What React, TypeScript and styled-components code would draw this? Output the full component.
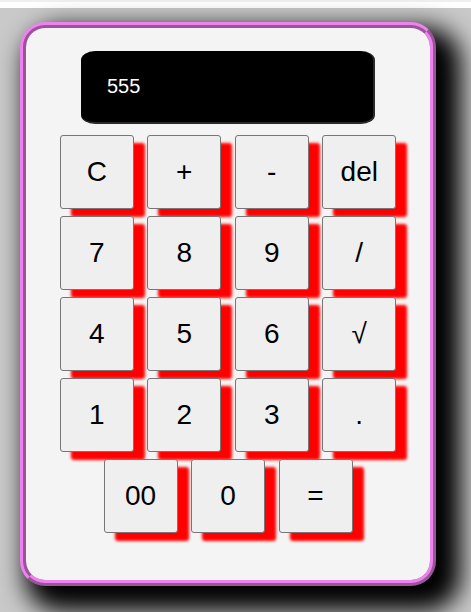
import React from "react";
import styled, { createGlobalStyle } from "styled-components";

const Global = createGlobalStyle`
  html, body {
    margin: 0;
    padding: 0;
    background: #ffffff;
    overflow: hidden;
  }
  body {
    font-family: "Liberation Sans", Arial, sans-serif;
  }
`;

const Page = styled.div`
  border-top: 2px solid #efefef;
  padding-top: 6px;
`;

const Stage = styled.div`
  background: #c9c9c9;
  min-height: 700px;
  padding: 14px 0 0 20px;
  box-sizing: border-box;
`;

const Card = styled.div`
  width: 416px;
  height: 564px;
  box-sizing: border-box;
  border: 6px ridge violet;
  border-radius: 25px;
  background: #f4f4f4;
  box-shadow: 15px 15px 25px 10px #000;
  padding-top: 23px;
  display: flex;
  flex-direction: column;
  align-items: center;
`;

const Display = styled.div`
  width: 294px;
  height: 73px;
  box-sizing: border-box;
  background: #000;
  border-radius: 14px / 9px;
  border-right: 2px solid #2a2a2a;
  border-bottom: 2px solid #2a2a2a;
  color: #fff;
  font-size: 20px;
  padding-left: 26px;
  display: flex;
  align-items: center;
`;

const Keys = styled.div`
  margin-top: 11px;
  width: 340px;
  display: flex;
  flex-wrap: wrap;
  justify-content: center;
  column-gap: 13.5px;
  row-gap: 7px;
`;

const Key = styled.button`
  width: 74px;
  height: 74px;
  box-sizing: border-box;
  margin: 0;
  padding: 0;
  background: #efefef;
  border: 1px solid #767676;
  border-radius: 3px;
  box-shadow: 11px 8px 3px #ff0000;
  font-family: "Liberation Sans", Arial, sans-serif;
  font-size: 28px;
  color: #000;
  display: flex;
  align-items: center;
  justify-content: center;
`;

const keys = ["C", "+", "-", "del", "7", "8", "9", "/", "4", "5", "6", "√", "1", "2", "3", ".", "00", "0", "="];

export default function App() {
  return (
    <>
      <Global />
      <Page>
        <Stage>
          <Card>
            <Display>555</Display>
            <Keys>
              {keys.map((k) => (
                <Key key={k}>{k}</Key>
              ))}
            </Keys>
          </Card>
        </Stage>
      </Page>
    </>
  );
}
